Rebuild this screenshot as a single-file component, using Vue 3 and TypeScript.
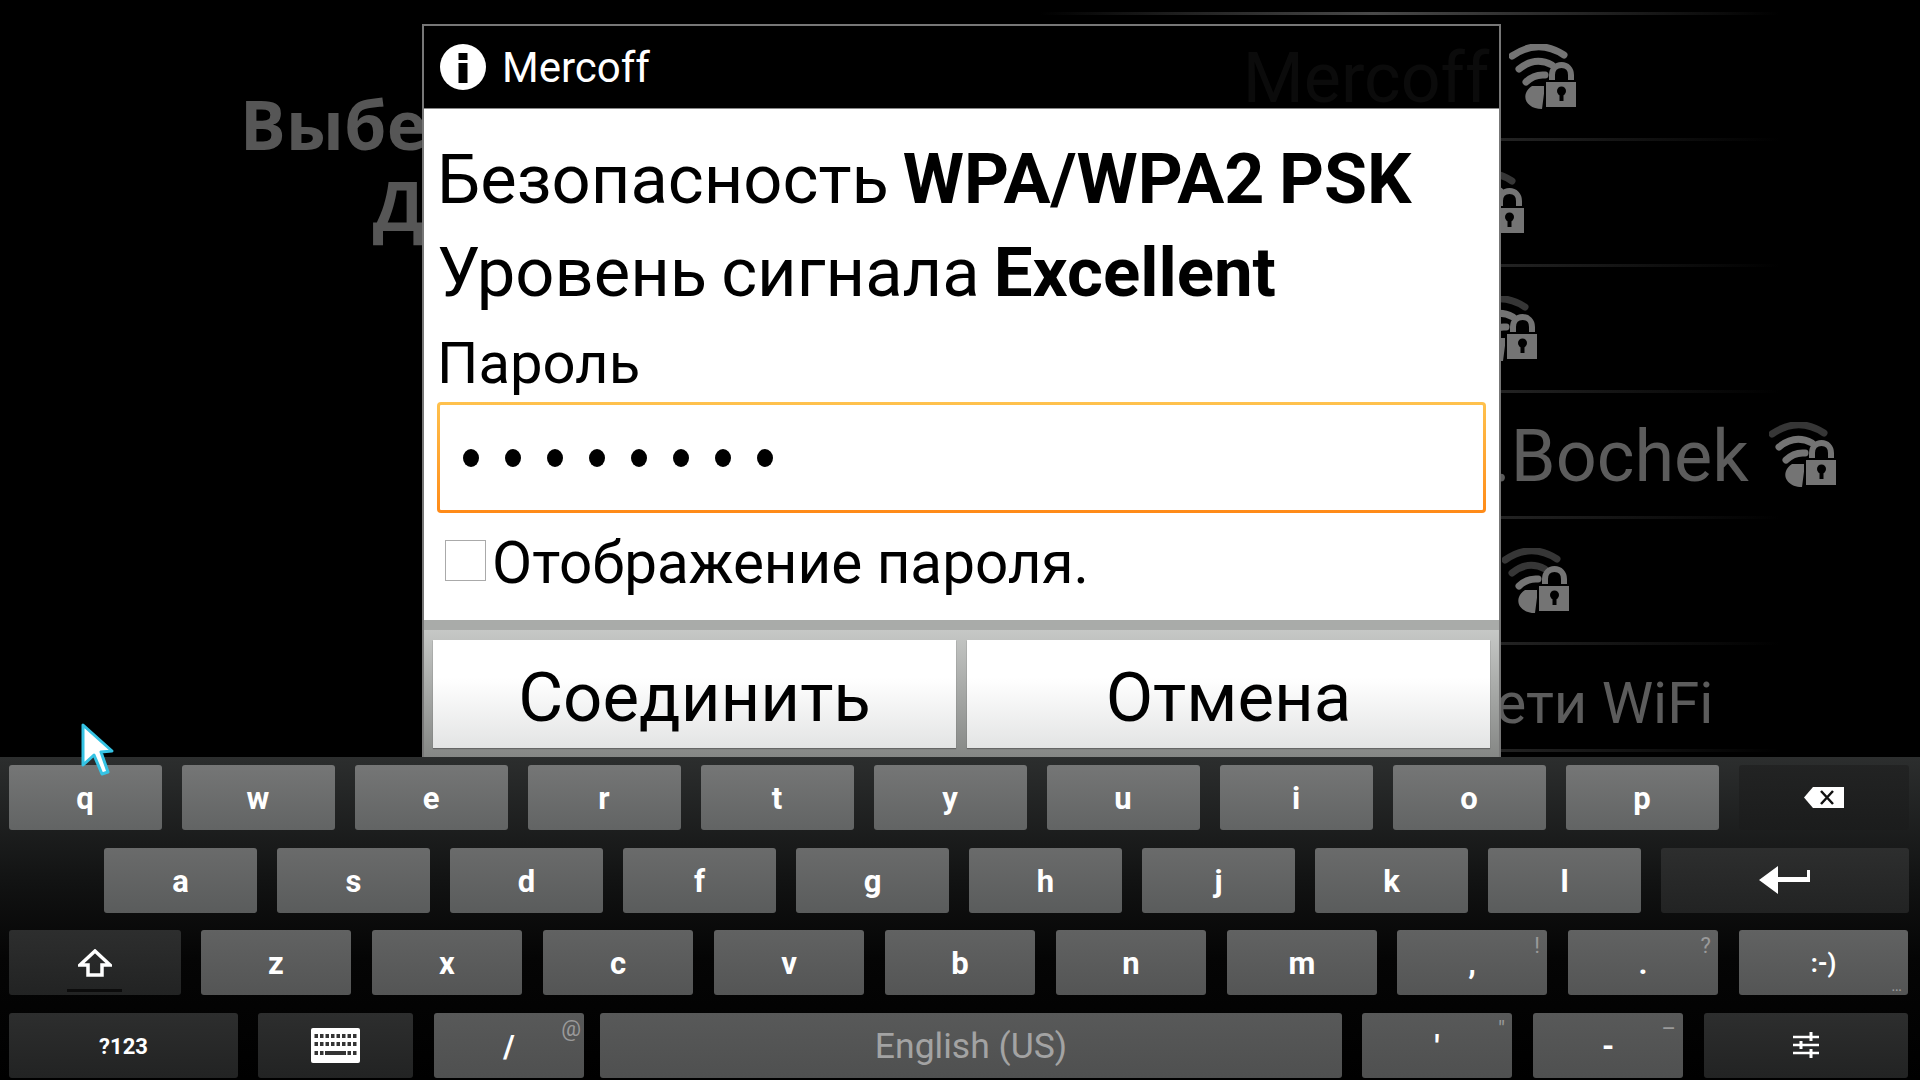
<template>
  <div class="screen">
    <div class="stage">
      <div class="intro">
        <div class="intro-line">Выберите сеть</div>
        <div class="intro-line">Другую</div>
      </div>

      <div class="networks">
        <div v-for="net in networks" :key="net.name" class="net-row">
          <span class="net-name">{{ net.name }}</span>
          <svg v-if="net.lit >= 0" class="net-icon" viewBox="0 0 68 65">
            <g fill="none" stroke-width="7" stroke-linecap="round">
              <path d="M3 12Q29-6 55 11" :stroke="arcColor(net.lit, 3)" />
              <path d="M10 25Q26 12 43 21" :stroke="arcColor(net.lit, 2)" />
              <path d="M17 38Q25 30 36 31" :stroke="arcColor(net.lit, 1)" />
            </g>
            <path d="M33 65C21 65 14 57 17 49 18 46 20 44 23 42L36 42Z" fill="#747474" />
            <path d="M43 39V31C43 25 47 21 52.500 21 58 21 62 25 62 31V39" fill="none" stroke="#747474" stroke-width="6" />
            <rect x="36" y="37" width="32" height="27" fill="#747474" stroke="#000" stroke-width="2" />
            <circle cx="52.500" cy="47" r="4.500" fill="#000" />
            <rect x="50.500" y="48" width="4" height="9" fill="#000" />
          </svg>
        </div>
      </div>

      <div class="dialog">
        <div class="dialog-title">
          <svg class="info-icon" viewBox="0 0 46 46">
            <circle cx="23" cy="23" r="23" fill="#fff" />
            <rect x="18.500" y="9" width="9" height="7" fill="#000" />
            <rect x="18.500" y="19" width="9" height="20" fill="#000" />
          </svg>
          <span>Mercoff</span>
        </div>
        <div class="dialog-body">
          <div class="info-line">Безопасность <b>WPA/WPA2 PSK</b></div>
          <div class="info-line">Уровень сигнала <b>Excellent</b></div>
          <div class="field-label">Пароль</div>
          <div class="password">
            <span v-for="n in 8" :key="n" class="dot"></span>
          </div>
          <div class="show-row">
            <span class="check"></span>
            <span>Отображение пароля.</span>
          </div>
        </div>
        <div class="dialog-strip"></div>
        <div class="dialog-buttons">
          <div class="dlg-btn">Соединить</div>
          <div class="dlg-btn">Отмена</div>
        </div>
      </div>
    </div>

    <div class="keyboard">
      <div
        v-for="(row, r) in rows"
        :key="r"
        class="kb-row"
        :class="'kb-row-' + r"
        :style="{ paddingLeft: row.pad + 'px' }"
      >
        <div
          v-for="(k, i) in row.keys"
          :key="k.id"
          class="key"
          :class="[k.cls, { dark: k.dark }]"
          :style="{ width: k.w + 'px', marginLeft: i ? (k.ml ?? row.gap) + 'px' : '0' }"
        >
          <svg v-if="k.id === 'del'" class="ico-del" viewBox="0 0 40 21">
            <path d="M9 0H40V21H9L0 10.500Z" fill="#fff" />
            <path d="M17 4L29 17M29 4L17 17" stroke="#111" stroke-width="2.500" />
          </svg>
          <svg v-else-if="k.id === 'enter'" class="ico-enter" viewBox="0 0 52 28">
            <path d="M0 14L19 0V11H48V4H51V16H19V28Z" fill="#fff" />
          </svg>
          <template v-else-if="k.id === 'shift'">
            <svg class="ico-shift" viewBox="0 0 34 28">
              <path d="M17 2L32 16H24V26H10V16H2Z" fill="none" stroke="#fff" stroke-width="3.500" />
            </svg>
            <span class="shift-bar"></span>
          </template>
          <svg v-else-if="k.id === 'kbd'" class="ico-kbd" viewBox="0 0 49 35">
            <rect width="49" height="35" rx="2" fill="#fff" />
            <g fill="#333">
              <template v-for="y in [6, 14]" :key="y">
                <rect v-for="n in 8" :key="n" :x="n * 5.500 - 2" :y="y" width="3.500" height="4" />
              </template>
              <rect v-for="n in [1, 2, 7, 8]" :key="n" :x="n * 5.500 - 2" y="23" width="3.500" height="4" />
              <rect x="14" y="23" width="21" height="4" />
            </g>
          </svg>
          <svg v-else-if="k.id === 'opts'" class="ico-opts" viewBox="0 0 26 26">
            <g stroke="#fff" stroke-width="2.500">
              <path d="M0 5H26M0 13H26M0 21H26" />
            </g>
            <g stroke="#fff" stroke-width="3">
              <path d="M18 0V9M8 9V17M18 17V26" />
            </g>
          </svg>
          <span v-else class="key-label">{{ k.label }}</span>
          <span v-if="k.hint" class="key-hint">{{ k.hint }}</span>
        </div>
      </div>
    </div>

    <svg class="pointer" viewBox="0 0 36 58">
      <path d="M3 3V43L14 33 22 52 28 50 21 30 32 29Z" fill="#fff" stroke="#35c3e4" stroke-width="3" stroke-linejoin="round" />
    </svg>
  </div>
</template>

<script setup lang="ts">
interface Net {
  name: string
  lit: number
}

interface Key {
  id: string
  label?: string
  w: number
  dark?: boolean
  hint?: string
  ml?: number
  cls?: string
}

interface Row {
  pad: number
  gap: number
  keys: Key[]
}

const networks: Net[] = [
  { name: 'Mercoff', lit: 3 },
  { name: 'Rost', lit: 2 },
  { name: 'Link1', lit: 2 },
  { name: 'Oleksandr_Evan.Bochek', lit: 2 },
  { name: 'Tenda1', lit: 1 },
  { name: 'Подключить сети WiFi', lit: -1 },
]

const arcColor = (lit: number, level: number) => (lit >= level ? '#747474' : '#363636')

const letters = (s: string, w: number): Key[] => s.split('').map((c) => ({ id: c, label: c, w }))

const rows: Row[] = [
  { pad: 8.5, gap: 20, keys: [...letters('qwertyuiop', 153), { id: 'del', w: 170, dark: true }] },
  { pad: 104, gap: 20, keys: [...letters('asdfghjkl', 153), { id: 'enter', w: 248, dark: true }] },
  {
    pad: 9,
    gap: 21,
    keys: [
      { id: 'shift', w: 172, dark: true, ml: 0 },
      { id: 'z', label: 'z', w: 150, ml: 20 },
      ...letters('xcvbnm', 150),
      { id: ',', label: ',', w: 150, hint: '!', ml: 20 },
      { id: '.', label: '.', w: 150, hint: '?' },
      { id: 'smile', label: ':-)', w: 169, hint: '…', cls: 'smile' },
    ],
  },
  {
    pad: 9,
    gap: 20,
    keys: [
      { id: 'sym', label: '?123', w: 229, dark: true, cls: 'sym' },
      { id: 'kbd', w: 155, dark: true },
      { id: '/', label: '/', w: 150, hint: '@', ml: 21, cls: 'slash' },
      { id: 'space', label: 'English (US)', w: 742, ml: 16, cls: 'space' },
      { id: 'quote', label: "'", w: 150, hint: '"' },
      { id: '-', label: '-', w: 150, hint: '–', ml: 21 },
      { id: 'opts', w: 204, dark: true, ml: 21 },
    ],
  },
]
</script>

<style>
body {
  background: #000;
}
</style>

<style scoped>
.screen {
  position: relative;
  width: 1920px;
  height: 1080px;
  overflow: hidden;
  background: #000;
  display: flex;
  flex-direction: column;
  font-family: Roboto, "Liberation Sans", sans-serif;
}

.stage {
  position: relative;
  height: 757px;
  display: flex;
  flex-shrink: 0;
}

.intro {
  width: 1012px;
  margin-right: 28px;
  padding-top: 83px;
  box-sizing: border-box;
  text-align: center;
  font-family: "Open Sans", sans-serif;
  font-weight: 700;
  font-size: 68px;
  line-height: 81px;
  letter-spacing: 0.3px;
  color: #565656;
  white-space: nowrap;
}

.networks {
  width: 740px;
  padding-top: 15px;
  background: linear-gradient(90deg, transparent, #4a4a4a 45%, transparent) 0 12px / 100% 3px no-repeat;
}

.net-row {
  height: 126px;
  display: flex;
  align-items: center;
  justify-content: center;
  gap: 20px;
  font-size: 70px;
  color: #5c5c5c;
  white-space: nowrap;
  background: linear-gradient(90deg, transparent, #333 45%, transparent) bottom / 100% 3px no-repeat;
}

.net-row:nth-child(4) {
  font-size: 72px;
}

.net-row:last-child {
  height: 107px;
  padding-top: 8px;
  box-sizing: border-box;
  font-size: 58px;
}

.net-icon {
  width: 68px;
  height: 65px;
  flex-shrink: 0;
  margin-top: -3px;
}

.dialog {
  position: absolute;
  left: 422px;
  top: 24px;
  bottom: 0;
  width: 1079px;
  box-sizing: border-box;
  border: 2px solid #777;
  border-bottom: none;
  display: flex;
  flex-direction: column;
}

.dialog-title {
  height: 83px;
  box-sizing: border-box;
  background: rgba(0, 0, 0, 0.88);
  border-bottom: 1px solid #888;
  display: flex;
  align-items: center;
  gap: 16px;
  padding-left: 16px;
  font-size: 42px;
  color: #fff;
}

.info-icon {
  width: 46px;
  height: 46px;
}

.dialog-body {
  height: 511px;
  box-sizing: border-box;
  background: #fff;
  padding: 24px 13px 0;
  color: #000;
}

.info-line {
  font-size: 68.7px;
  line-height: 93px;
  word-spacing: -3px;
  white-space: nowrap;
}

.info-line b {
  font-size: 70px;
}

.info-line + .info-line b {
  font-size: 69px;
}

.field-label {
  font-size: 58px;
  line-height: 70px;
  margin-top: 9px;
}

.password {
  margin-top: 4px;
  height: 111px;
  box-sizing: border-box;
  border: 3px solid transparent;
  border-radius: 4px;
  background: linear-gradient(#fff, #fff) padding-box, linear-gradient(#ffc24e, #ff8a17) border-box;
  display: flex;
  align-items: center;
  gap: 26px;
  padding-left: 23px;
}

.dot {
  width: 16px;
  height: 18px;
  border-radius: 50%;
  background: #000;
}

.show-row {
  margin-top: 15px;
  display: flex;
  gap: 6px;
  font-size: 58.4px;
  line-height: 70px;
}

.check {
  width: 41px;
  height: 41px;
  box-sizing: border-box;
  margin: 12px 0 0 8px;
  border: 1px solid #aaa;
  background: #fff;
}

.dialog-strip {
  height: 10px;
  background: #a9aba9;
}

.dialog-buttons {
  flex: 1;
  display: flex;
  gap: 11px;
  padding: 10px 9px 9px;
  background: linear-gradient(#c6c8c6, #858785);
}

.dlg-btn {
  flex: 1;
  box-sizing: border-box;
  padding-top: 6px;
  display: flex;
  align-items: center;
  justify-content: center;
  font-size: 69px;
  color: #000;
  background: linear-gradient(#fff 35%, #e3e4e4);
  box-shadow: 0 1px 1px #666;
}

.keyboard {
  height: 323px;
  box-sizing: border-box;
  padding-top: 8px;
  display: flex;
  flex-direction: column;
  gap: 17.67px;
  background: linear-gradient(#2c2e2e, #121313 38%, #050505 62%, #000);
}

.kb-row {
  display: flex;
  height: 65px;
}

.key {
  position: relative;
  flex-shrink: 0;
  height: 100%;
  border-radius: 3px;
  display: flex;
  align-items: center;
  justify-content: center;
  color: #fff;
  font-weight: 700;
  font-size: 31px;
}

.key-label {
  position: relative;
  top: 1px;
}

.kb-row-0 .key {
  background: linear-gradient(#757676, #626464);
}

.kb-row-1 .key {
  background: linear-gradient(#6a6b6b, #5a5c5c);
}

.kb-row-2 .key {
  background: linear-gradient(#616262, #545555);
}

.kb-row-3 .key {
  background: linear-gradient(#585959, #4f5050);
}

.kb-row-0 .key.dark {
  background: linear-gradient(#222323, #1b1c1c);
}

.kb-row-1 .key.dark,
.kb-row-2 .key.dark,
.kb-row-3 .key.dark {
  background: linear-gradient(#2d2e2e, #222323);
}

.key.sym {
  font-size: 22px;
}

.key.smile {
  font-size: 25px;
}

.key.space {
  font-weight: 400;
  font-size: 35.5px;
  color: #a3a3a3;
}

.key.space .key-label {
  top: 1px;
}

.key-hint {
  position: absolute;
  top: 3px;
  right: 7px;
  font-size: 22px;
  font-weight: 400;
  color: #9a9a9a;
}

.key.slash .key-hint {
  right: 3px;
}

.key.smile .key-hint {
  top: auto;
  bottom: 0;
  right: 6px;
  font-size: 16px;
}

.ico-del {
  width: 40px;
  height: 21px;
}

.ico-enter {
  width: 52px;
  height: 28px;
}

.ico-shift {
  width: 34px;
  height: 28px;
  margin-top: 1px;
}

.shift-bar {
  position: absolute;
  left: 58px;
  bottom: 3px;
  width: 55px;
  height: 3px;
  background: #0c0c0c;
}

.ico-kbd {
  width: 49px;
  height: 35px;
}

.ico-opts {
  width: 26px;
  height: 26px;
}

.pointer {
  position: absolute;
  left: 80px;
  top: 722px;
  width: 36px;
  height: 58px;
}
</style>
